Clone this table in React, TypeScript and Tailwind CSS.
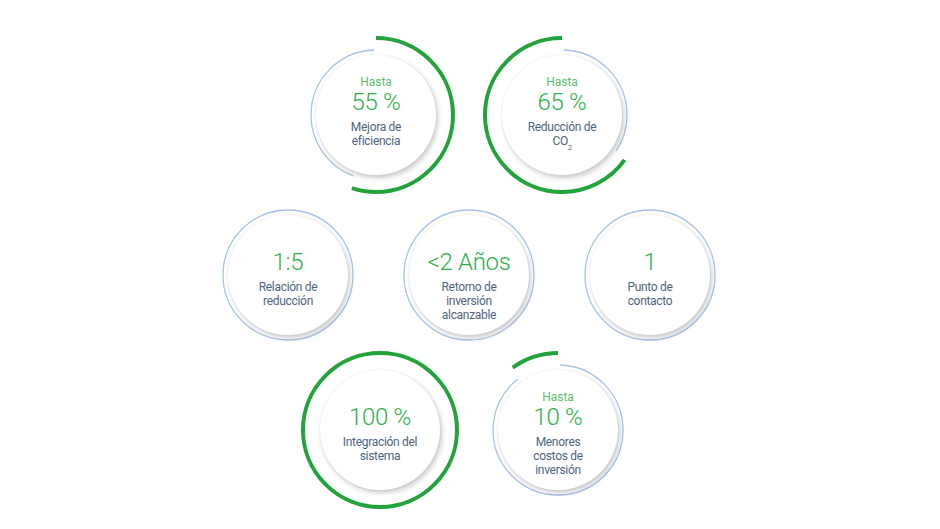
interface Stat {
  hasta?: boolean;
  value: string;
  label: React.ReactNode;
  progress?: number;
  ccw?: boolean;
}

const GREEN_R = 77;
const BLUE_R = 65;

const StatRing = ({ progress, ccw }: { progress?: number; ccw?: boolean }) => {
  const gLen = 2 * Math.PI * GREEN_R;
  const bLen = 2 * Math.PI * BLUE_R;
  const p = progress ?? 0;
  const gap = progress ? 0.006 : 0;
  const blueStart = p + gap;
  const blueLen = Math.max(0, 1 - p - gap * 2);

  return (
    <svg
      className="absolute inset-0"
      width="160"
      height="160"
      viewBox="0 0 160 160"
      fill="none"
    >
      <g transform={ccw ? 'translate(160 0) scale(-1 1)' : undefined}>
        <g transform="rotate(-90 80 80)">
          {blueLen > 0 && (
            <circle
              cx="80"
              cy="80"
              r={BLUE_R}
              stroke="#a9c2e7"
              strokeWidth="1.3"
              strokeDasharray={`0 ${bLen * blueStart} ${bLen * blueLen} ${bLen}`}
            />
          )}
          {p > 0 && (
            <circle
              cx="80"
              cy="80"
              r={GREEN_R}
              stroke="#22a33b"
              strokeWidth="4"
              strokeDasharray={p >= 1 ? undefined : `${gLen * p} ${gLen}`}
            />
          )}
        </g>
      </g>
    </svg>
  );
};

const StatCircle = ({ hasta, value, label, progress, ccw }: Stat) => {
  return (
    <div className="relative w-[160px] h-[160px] flex items-center justify-center flex-shrink-0">
      <StatRing progress={progress} ccw={ccw} />
      <div className="relative w-[120px] h-[120px] rounded-full bg-white shadow-[2px_3px_5px_rgba(0,0,0,0.2),0_0_3px_rgba(0,0,0,0.08)] flex flex-col items-center pt-[21px] text-center font-['Roboto','Liberation_Sans',sans-serif]">
        <p className={`text-[12px] leading-[12px] text-[#5cbf6e] ${hasta ? '' : 'invisible'}`}>Hasta</p>
        <p className="text-[24px] leading-[28px] font-light tracking-[-0.3px] text-[#2eb04b] whitespace-nowrap">{value}</p>
        <p className="mt-[4px] text-[12px] leading-[14px] tracking-[-0.3px] text-[#4e6580]">{label}</p>
      </div>
    </div>
  );
};

const App = () => {
  return (
    <div className="w-full min-h-screen bg-white pt-[35px] pr-[2px] flex flex-col items-center">
      <div className="flex gap-[26px] h-[160px]">
        <StatCircle
          hasta
          value="55 %"
          progress={0.55}
          label={<>Mejora de<br />eficiencia</>}
        />
        <StatCircle
          hasta
          value="65 %"
          progress={0.65}
          ccw
          label={<>Reducción de<br />CO<sub className="text-[7px] align-[-3px]">2</sub></>}
        />
      </div>
      <div className="flex gap-[21px] h-[160px]">
        <StatCircle value="1:5" label={<>Relación de<br />reducción</>} />
        <StatCircle value="<2 Años" label={<>Retorno de<br />inversión<br />alcanzable</>} />
        <StatCircle value="1" label={<>Punto de<br />contacto</>} />
      </div>
      <div className="flex gap-[18px] h-[160px] -mt-[5px]">
        <StatCircle value="100 %" progress={1} label={<>Integración del<br />sistema</>} />
        <StatCircle
          hasta
          value="10 %"
          progress={0.1}
          ccw
          label={<>Menores<br />costos de<br />inversión</>}
        />
      </div>
    </div>
  );
};

export default App;
